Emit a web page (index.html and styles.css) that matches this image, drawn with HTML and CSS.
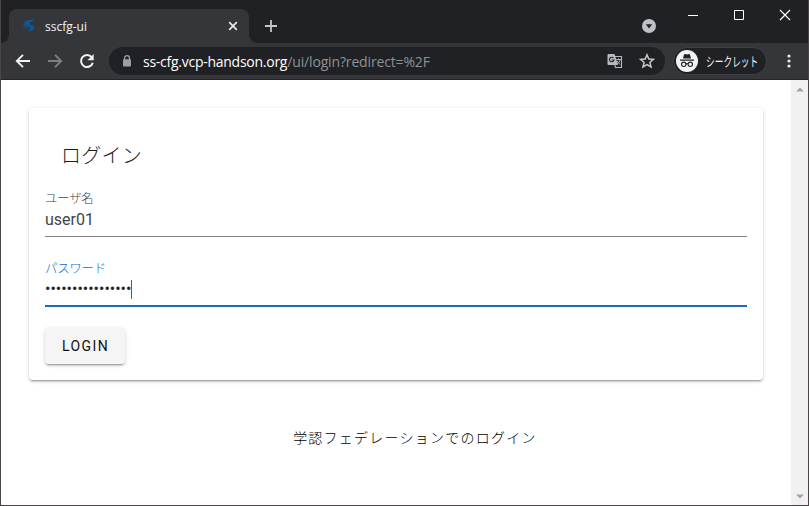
FILE: index.html
```html
<!DOCTYPE html>
<html lang="ja">
<head>
<meta charset="utf-8">
<title>sscfg-ui</title>
<link rel="stylesheet" href="styles.css">
</head>
<body>
<div class="window">
  <header class="tabstrip">
    <div class="tab">
      <svg class="favicon" width="14" height="14" viewBox="0 0 14 14"><path fill="#075a9f" d="M12.500 1.500C8 .5 2.500 1.500 2.200 4.200 2 6 4 6.800 6.500 7.200c2.500.6 2 3-1 5.300 4-.2 7-2.200 6.700-4.500C12 6.200 8 6.200 7.500 4.800 7.200 3.500 9.500 2.300 12.500 1.500z"/><path fill="#075a9f" d="M.5 4.800C1.500 6.500 4.500 7 7 8 5.500 9.300 1.500 8.300 .5 4.800z"/></svg>
      <span class="tab-title">sscfg-ui</span>
      <svg class="tab-close" width="10" height="10" viewBox="0 0 10 10"><path d="M1.200 1.200l7.600 7.600M8.800 1.200L1.200 8.800" stroke="#e8eaed" stroke-width="1.700"/></svg>
    </div>
    <svg class="new-tab" width="14" height="14" viewBox="0 0 14 14"><path d="M7 1v12M1 7h12" stroke="#c5c7ca" stroke-width="1.800"/></svg>
    <svg class="tab-search" width="14" height="14" viewBox="0 0 14 14"><circle cx="7" cy="7" r="7" fill="#bdc1c6"/><path d="M3.800 5.200h6.400L7 9.400z" fill="#202124"/></svg>
    <div class="controls">
      <svg width="46" height="30" viewBox="0 0 46 30"><path d="M18 15.500h10" stroke="#fff"/></svg>
      <svg width="46" height="30" viewBox="0 0 46 30"><path d="M18.500 10.500h9v9h-9z" fill="none" stroke="#fff"/></svg>
      <svg width="46" height="30" viewBox="0 0 46 30"><path d="M18 10l10 10M28 10L18 20" stroke="#fff" stroke-width="1.200"/></svg>
    </div>
  </header>
  <div class="toolbar">
    <nav class="nav">
      <svg width="16" height="16" viewBox="0 0 16 16"><path d="M15 8H2.500M8 1.800L1.800 8 8 14.200" fill="none" stroke="#f1f3f4" stroke-width="1.900"/></svg>
      <svg width="16" height="16" viewBox="0 0 16 16"><path d="M1 8h12.500M8 1.800L14.200 8 8 14.200" fill="none" stroke="#7d7f83" stroke-width="1.900"/></svg>
      <svg width="16" height="16" viewBox="0 0 16 16"><path d="M12.700 4.200A6 6 0 1 0 13.800 9.700" fill="none" stroke="#f1f3f4" stroke-width="2"/><path d="M14.700 1v6.200H8.500z" fill="#f1f3f4"/></svg>
    </nav>
    <div class="omnibox">
      <svg class="lock" width="10" height="12" viewBox="0 0 10 12"><path d="M2.500 5V3.200a2.500 2.500 0 0 1 5 0V5" fill="none" stroke="#9aa0a6" stroke-width="1.300"/><rect x="1" y="4.300" width="8" height="7.200" rx="1" fill="#9aa0a6"/></svg>
      <span class="url"><span class="domain">ss-cfg.vcp-handson.org</span><span class="path">/ui/login?redirect=%2F</span></span>
      <svg class="translate" width="16" height="16" viewBox="0 0 16 16"><path d="M1.500 1h6l3.500 11H1.500a1 1 0 0 1-1-1V2a1 1 0 0 1 1-1z" fill="#b6b9bd"/><path d="M8 3.500h6.500v11H8.500L7.800 12" fill="none" stroke="#b6b9bd" stroke-width="1.100"/><path d="M6.500 5A2.300 2.300 0 1 0 7 7H4.800" fill="none" stroke="#202124" stroke-width="1.100"/><path d="M9.300 6.500h4.500M11.500 5.500v1M13 6.500c-.3 2-1.500 3.500-3 4.700M10.200 7.800c.5 1.500 1.800 2.800 3 3.700" fill="none" stroke="#b6b9bd"/></svg>
      <svg class="star" width="16" height="16" viewBox="0 0 16 16"><path d="M8 1.800l1.800 4.200 4.600.4-3.500 3 1.100 4.500L8 11.500l-4 2.400 1.100-4.500-3.500-3L6.200 6z" fill="none" stroke="#c7c9cc" stroke-width="1.500"/></svg>
    </div>
    <div class="chip">
      <svg width="22" height="22" viewBox="0 0 22 22"><circle cx="11" cy="11" r="11" fill="#f1f3f4"/><path d="M7 8.500L8 4.500l1.200-.4 1.800.5 1.800-.5 1.200.4 1 4zM4 9.500h14v1.300H4z" fill="#202124"/><g fill="none" stroke="#202124" stroke-width="1.100"><circle cx="7.700" cy="14.300" r="2.200"/><circle cx="14.300" cy="14.300" r="2.200"/><path d="M9.900 14q1.100-.7 2.200 0"/></g></svg>
      <span class="chip-label">シークレット</span>
    </div>
    <svg class="menu" width="4" height="14" viewBox="0 0 4 14" fill="#e8eaed"><circle cx="2" cy="2" r="1.600"/><circle cx="2" cy="7" r="1.600"/><circle cx="2" cy="12" r="1.600"/></svg>
  </div>
  <div class="viewport">
    <main class="page">
      <form class="card">
        <h1 class="title">ログイン</h1>
        <div class="field">
          <div class="label">ユーザ名</div>
          <div class="value">user01</div>
        </div>
        <div class="field focused">
          <div class="label">パスワード</div>
          <div class="value"><span class="dots">••••••••••••••••</span><span class="caret"></span></div>
        </div>
        <button class="login" type="button">LOGIN</button>
      </form>
      <a class="federation">学認フェデレーションでのログイン</a>
    </main>
    <div class="scrollbar">
      <svg width="8" height="5" viewBox="0 0 8 5"><path d="M0 4.500L4 .5l4 4z" fill="#a3a3a3"/></svg>
      <svg width="8" height="5" viewBox="0 0 8 5"><path d="M0 .5l4 4 4-4z" fill="#a3a3a3"/></svg>
    </div>
  </div>
</div>
</body>
</html>
```
FILE: styles.css
```css
* { box-sizing: border-box; }
body { margin: 0; background: #fff; overflow: hidden; }
svg { display: block; flex: none; }
.window {
  width: 809px; height: 506px;
  display: flex; flex-direction: column;
  border: solid #4b454a; border-width: 0 1px 1px;
  background: #fff;
}
.tabstrip { height: 43px; flex: none; display: flex; align-items: flex-start; background: #202124; padding-left: 8px; }
.tab {
  width: 240px; height: 34px; margin-top: 9px; padding: 0 11px 0 13px;
  display: flex; align-items: center;
  border-radius: 8px 8px 0 0; background: #35363a; position: relative;
}
.tab::before, .tab::after { content: ""; position: absolute; bottom: 0; width: 8px; height: 8px; }
.tab::before { left: -8px; background: radial-gradient(circle at 0 0, #202124 7.500px, #35363a 8px); }
.tab::after { right: -8px; background: radial-gradient(circle at 100% 0, #202124 7.500px, #35363a 8px); }
.tab-title { margin-left: 9px; flex: 1; font: 12px "Open Sans", sans-serif; color: #f1f3f4; }
.new-tab { margin: 19px 0 0 15px; }
.tab-search { margin: 19px 0 0 auto; }
.controls { display: flex; margin-left: 14px; }
.toolbar { height: 37px; flex: none; display: flex; align-items: center; background: #35363a; border-bottom: 1px solid #242528; padding-left: 14px; }
.nav { display: flex; gap: 16px; }
.omnibox { width: 556px; height: 28px; margin-left: 14px; padding: 0 10px 0 13px; display: flex; align-items: center; border-radius: 14px; background: #202124; }
.url { flex: 1; margin-left: 11px; font: 14px "Open Sans", sans-serif; white-space: nowrap; }
.domain { color: #fff; letter-spacing: -.26px; }
.path { color: #8d9197; letter-spacing: -.15px; }
.star { margin-left: 16px; }
.chip { width: 94px; height: 28px; margin-left: 8px; padding-left: 2px; display: flex; align-items: center; border: 1px solid #3f4043; border-radius: 14px; background: #202124; }
.chip-label { margin-left: 8px; font: 13px/22px "Noto Sans CJK JP", sans-serif; transform: scaleX(.67); transform-origin: 0 50%; color: #f1f3f4; white-space: nowrap; }
.menu { margin-left: 20px; }
.viewport { flex: 1; display: flex; min-height: 0; }
.page { flex: 1; padding: 28px 28px 0; display: flex; flex-direction: column; align-items: center; }
.card {
  width: 734px; height: 272px; padding: 31px 16px 16px; border-radius: 4px; background: #fff;
  box-shadow: 0 3px 1px -2px rgba(0,0,0,.2), 0 2px 2px rgba(0,0,0,.14), 0 1px 5px rgba(0,0,0,.12);
}
.title { margin: 0 0 18px 16px; font: 300 20px/32px "Noto Sans CJK JP", sans-serif; letter-spacing: .25px; color: #1e1e1e; }
.field { height: 48px; margin-bottom: 22px; border-bottom: 1px solid #858585; }
.label { font: 300 12.300px/18px "Noto Sans CJK JP", sans-serif; letter-spacing: -.1px; color: #444; }
.value { display: flex; align-items: center; height: 26px; font: 16px/26px Roboto, sans-serif; color: #444; }
.focused { height: 48px; margin-bottom: 21px; border-bottom: 2px solid #1867c0; }
.focused .label { color: #0a68d0; }
.focused .value { height: 24px; line-height: 24px; color: #222; }
.caret { width: 1px; height: 19px; background: #1867c0; }
.login {
  display: block; width: 80px; height: 36px; padding: 0 0 0 1px; border: 0; border-radius: 4px; background: #f5f5f5;
  font: 400 14px/36px Roboto, sans-serif; letter-spacing: 1.400px; color: #111;
  box-shadow: 0 3px 1px -2px rgba(0,0,0,.2), 0 2px 2px rgba(0,0,0,.14), 0 1px 5px rgba(0,0,0,.12);
}
.federation { margin: 45px 0 0 38px; font: 300 14px/24px "Noto Sans CJK JP", sans-serif; letter-spacing: 1.250px; color: #000; white-space: nowrap; }
.scrollbar { width: 17px; background: #f1f1f1; display: flex; flex-direction: column; justify-content: space-between; align-items: center; padding: 7px 0 6px; }
```
